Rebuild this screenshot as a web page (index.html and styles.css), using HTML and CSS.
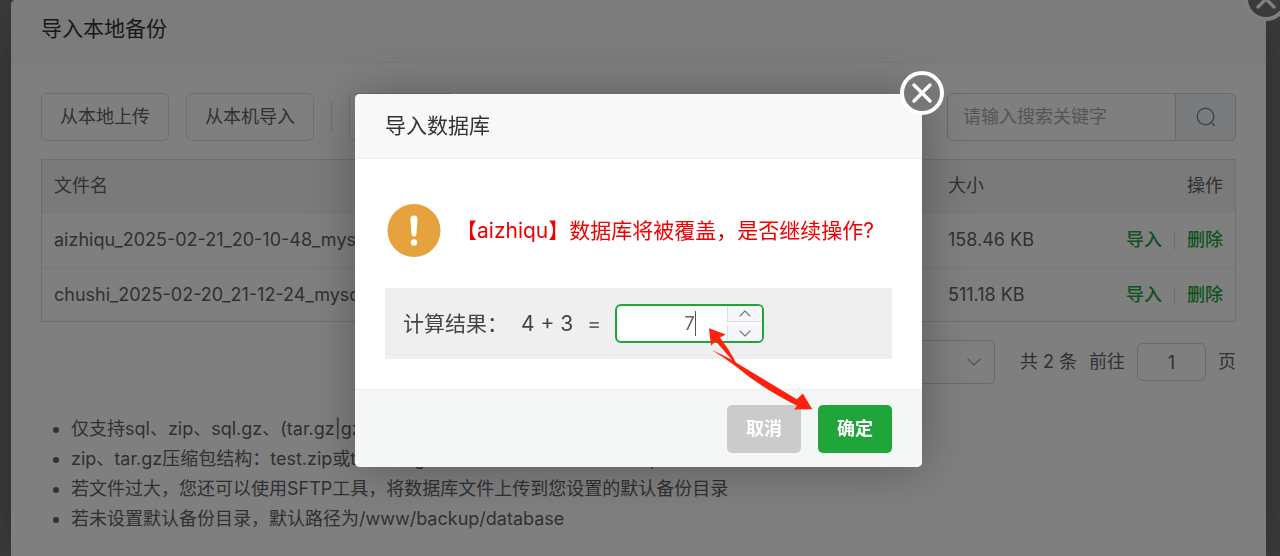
FILE: index.html
```html
<!DOCTYPE html>
<html lang="zh-CN">
<head>
<meta charset="utf-8">
<title>导入本地备份</title>
<link rel="stylesheet" href="styles.css">
</head>
<body>
<main class="page">
  <section class="dialog">
    <button class="close" aria-label="关闭"><svg viewBox="0 0 44 44"><circle cx="22" cy="22" r="20"/><path d="M14 14l16 16M30 14L14 30"/></svg></button>
    <header class="dialog-head"><h1 class="title">导入本地备份</h1></header>
    <div class="dialog-body">
      <div class="toolbar">
        <button class="btn">从本地上传</button>
        <button class="btn">从本机导入</button>
        <span class="divider"></span>
        <button class="btn btn-blank" aria-label="更多"></button>
        <form class="search">
          <input class="search-input" type="text" placeholder="请输入搜索关键字" aria-label="搜索">
          <button class="search-btn" type="button" aria-label="搜索"><svg viewBox="0 0 20 20"><circle cx="9.5" cy="9.5" r="8.3"/><path d="M15.3 15.3l3.2 3.2"/></svg></button>
        </form>
      </div>
      <table class="files">
        <thead><tr><th>文件名</th><th class="col-size">大小</th><th class="col-ops">操作</th></tr></thead>
        <tbody>
          <tr><td>aizhiqu_2025-02-21_20-10-48_mysql_data.sql.zip</td><td>158.46 KB</td><td class="col-ops"><a class="link" href="#">导入</a><span class="bar"></span><a class="link" href="#">删除</a></td></tr>
          <tr><td>chushi_2025-02-20_21-12-24_mysql_data.sql.zip</td><td>511.18 KB</td><td class="col-ops"><a class="link" href="#">导入</a><span class="bar"></span><a class="link" href="#">删除</a></td></tr>
        </tbody>
      </table>
      <div class="pager">
        <div class="select-wrap">
          <select class="size-select" aria-label="每页条数"><option>10条/页</option></select>
          <svg class="chevron" viewBox="0 0 14 8"><path d="M1 1l6 6 6-6"/></svg>
        </div>
        <span class="total">共 2 条</span>
        <label class="jump">前往<input class="jump-input" type="text" value="1"><span>页</span></label>
      </div>
      <ul class="notes">
        <li>仅支持sql、zip、sql.gz、(tar.gz|gz|tgz)</li>
        <li>zip、tar.gz压缩包结构：test.zip或test.tar.gz压缩包内，必须包含test.sql</li>
        <li>若文件过大，您还可以使用SFTP工具，将数据库文件上传到您设置的默认备份目录</li>
        <li>若未设置默认备份目录，默认路径为/www/backup/database</li>
      </ul>
    </div>
  </section>
</main>
<div class="overlay">
  <section class="modal" role="dialog" aria-labelledby="modal-title">
    <button class="close" aria-label="关闭"><svg viewBox="0 0 44 44"><circle cx="22" cy="22" r="20"/><path d="M14 14l16 16M30 14L14 30"/></svg></button>
    <header class="modal-head"><h2 class="title" id="modal-title">导入数据库</h2></header>
    <div class="modal-body">
      <div class="warning">
        <svg class="warn-icon" viewBox="0 0 54 54"><circle class="warn-disc" cx="27" cy="26.5" r="26.5"/><path class="warn-mark" d="M23.4 15a3.6 3.6 0 0 1 7.2 0l-1.2 15.3a2.4 2.4 0 0 1-4.8 0z"/><circle class="warn-mark" cx="27" cy="38.5" r="3.2"/></svg>
        <p class="warn-text">【aizhiqu】数据库将被覆盖，是否继续操作?</p>
      </div>
      <div class="calc">
        <label class="calc-label" for="answer">计算结果：</label>
        <span class="calc-sum">4 + 3</span>
        <span class="calc-eq">=</span>
        <div class="number">
          <input class="number-input" id="answer" type="text" value="7">
          <span class="caret"></span>
          <div class="steps">
            <button class="step" aria-label="增加"><svg viewBox="0 0 12 7"><path d="M1 6l5-5 5 5"/></svg></button>
            <button class="step" aria-label="减少"><svg viewBox="0 0 12 7"><path d="M1 1l5 5 5-5"/></svg></button>
          </div>
        </div>
      </div>
    </div>
    <footer class="modal-foot">
      <button class="action action-cancel">取消</button>
      <button class="action action-ok">确定</button>
    </footer>
    <svg class="arrows" viewBox="705 324 112 90"><path d="M709 328.3L725.8 334.4L720 337.4Q729 349 736 362.5L796.8 399.3L802.8 393.4L812.3 409.3L794 409.4L797 405.8Q760 387 736 366.5Q725 358 711.7 350Q722 354.5 732 360L715.6 341L711 345.8Z"/></svg>
  </section>
</div>
</body>
</html>
```

FILE: styles.css
```css
* { box-sizing: border-box; }

body {
  margin: 0;
  background: #7a7a7a;
  color: #606266;
  font: 18px/30px Inter, "Noto Sans CJK SC", sans-serif;
  overflow: hidden;
}

button, input, select { font: inherit; color: inherit; margin: 0; padding: 0; }
svg { display: block; fill: none; stroke-linecap: round; stroke-linejoin: round; }

.page { padding: 0 14px 0 11px; }

.dialog {
  position: relative;
  min-height: 100vh;
  background: #fff;
  border-radius: 5px 5px 0 0;
  box-shadow: 1px 1px 50px rgba(0, 0, 0, .3);
}

.title { margin: 0; font-size: 21px; line-height: 32px; font-weight: 400; color: #333; }

.dialog-head {
  padding: 13px 30px 17px;
  background: #f8f8f8;
  border-bottom: 1px solid #eee;
  border-radius: 5px 5px 0 0;
}

.dialog-body { padding: 30px; }

.toolbar { display: flex; align-items: center; gap: 17px; margin-bottom: 18px; }

.btn {
  height: 48px;
  padding: 0 18px;
  background: #fff;
  border: 1px solid #dcdfe6;
  border-radius: 6px;
}

.btn-blank { width: 107px; }

.divider { width: 1px; height: 30px; background: #dcdfe6; }

.search { display: flex; width: 289px; height: 48px; margin-left: auto; }

.search-input {
  flex: 1;
  min-width: 0;
  padding: 0 15px;
  background: #fff;
  border: 1px solid #d0d3da;
  border-radius: 6px 0 0 6px;
}

.search-input::placeholder { color: #a8abb2; opacity: 1; }

.search-btn {
  display: flex;
  align-items: center;
  justify-content: center;
  width: 60px;
  background: #f5f7fa;
  border: 1px solid #d0d3da;
  border-left: 0;
  border-radius: 0 6px 6px 0;
}

.search-btn svg { width: 20px; stroke: #85888e; stroke-width: 1.4; }

.files {
  width: 100%;
  table-layout: fixed;
  border: 1px solid #dcdfe4;
  border-spacing: 0;
}

.files th, .files td { padding: 11px 12px; text-align: left; font-weight: 400; white-space: nowrap; }
.files th { height: 53px; background: #f5f5f5; border-bottom: 1px solid #ebeef5; }
.files td { height: 54px; }
.files tbody tr + tr td { border-top: 1px solid #ebeef5; }
.files .col-size { width: 149px; }
.files .col-ops { width: 150px; text-align: right; }
.link { color: #20a53a; font-weight: 500; text-decoration: none; }

.bar {
  display: inline-block;
  width: 1px;
  height: 18px;
  margin: 0 12px;
  vertical-align: middle;
  background: #dcdfe6;
}

.pager { display: flex; align-items: center; justify-content: flex-end; margin-top: 18px; }
.select-wrap { position: relative; width: 180px; }

.size-select {
  width: 100%;
  height: 44px;
  padding: 0 18px;
  appearance: none;
  background: #fff;
  border: 1px solid #d0d3da;
  border-radius: 6px;
}

.chevron { position: absolute; right: 14px; top: 18px; width: 14px; stroke: #a8abb2; stroke-width: 1.3; }
.total { margin: 0 12px 0 25px; }
.jump { display: flex; align-items: center; gap: 12px; }

.jump-input {
  width: 69px;
  height: 38px;
  text-align: center;
  background: #fff;
  border: 1px solid #d0d3da;
  border-radius: 6px;
}

.notes { margin: 30px 0 0; padding-left: 30px; }

.overlay {
  position: fixed;
  inset: 0;
  display: flex;
  align-items: flex-start;
  justify-content: center;
  padding: 94px 3px 0 0;
  background: rgba(0, 0, 0, .5);
}

.modal {
  position: relative;
  width: 567px;
  background: #fff;
  border-radius: 5px;
  box-shadow: 1px 1px 50px rgba(0, 0, 0, .3);
}

.modal-head {
  padding: 16px 30px;
  background: #f8f8f8;
  border-bottom: 1px solid #eee;
  border-radius: 5px 5px 0 0;
}

.modal-body { padding: 45px 30px 30px; }
.warning { display: flex; align-items: center; gap: 15px; padding-left: 2px; margin-bottom: 30px; }
.warn-icon { width: 54px; flex: none; }
.warn-disc { fill: #e6a23c; }
.warn-mark { fill: #fff; }
.warn-text { margin: 0; font-size: 21px; color: #f00000; white-space: nowrap; }

.calc {
  display: flex;
  align-items: center;
  padding: 16px 18px;
  background: #efefef;
  font-size: 21px;
  color: #444;
}

.calc-label { width: 118px; }
.calc-eq { margin: 0 14px; color: #666; }
.number { position: relative; width: 149px; height: 39px; color: #606266; font-size: 18px; }

.number-input {
  width: 100%;
  height: 100%;
  text-align: center;
  background: #fff;
  border: 2px solid #20a53a;
  border-radius: 6px;
}

.caret { position: absolute; left: 80px; top: 7px; width: 1px; height: 25px; background: #555; }

.steps {
  position: absolute;
  top: 2px;
  right: 2px;
  bottom: 2px;
  width: 35px;
  display: flex;
  flex-direction: column;
  justify-content: space-between;
}

.step {
  display: flex;
  align-items: center;
  justify-content: center;
  height: 16px;
  background: #f5f7fa;
  border: 0;
  border-left: 1px solid #dcdfe6;
}

.step:first-child { border-bottom: 1px solid #dcdfe6; border-top-right-radius: 4px; }
.step:last-child { border-bottom-right-radius: 4px; }
.step svg { width: 12px; stroke: #73767a; stroke-width: 1.1; }

.modal-foot {
  display: flex;
  justify-content: flex-end;
  gap: 17px;
  padding: 15px 30px 14px;
  background: #f5f7f7;
  border-top: 1px solid #edf0f0;
  border-radius: 0 0 5px 5px;
}

.action { width: 74px; height: 48px; border: 0; border-radius: 5px; color: #fff; font-weight: 700; }
.action-cancel { background: #cbcbcb; }
.action-ok { background: #20a53a; }

.close {
  position: absolute;
  top: -23px;
  right: -22px;
  width: 44px;
  height: 44px;
  background: none;
  border: 0;
}

.close circle { fill: #777; stroke: #fff; stroke-width: 4; }
.close path { stroke: #fff; stroke-width: 3.4; }

.arrows { position: absolute; left: 350px; top: 230px; width: 112px; fill: #ff2010; pointer-events: none; }
```
